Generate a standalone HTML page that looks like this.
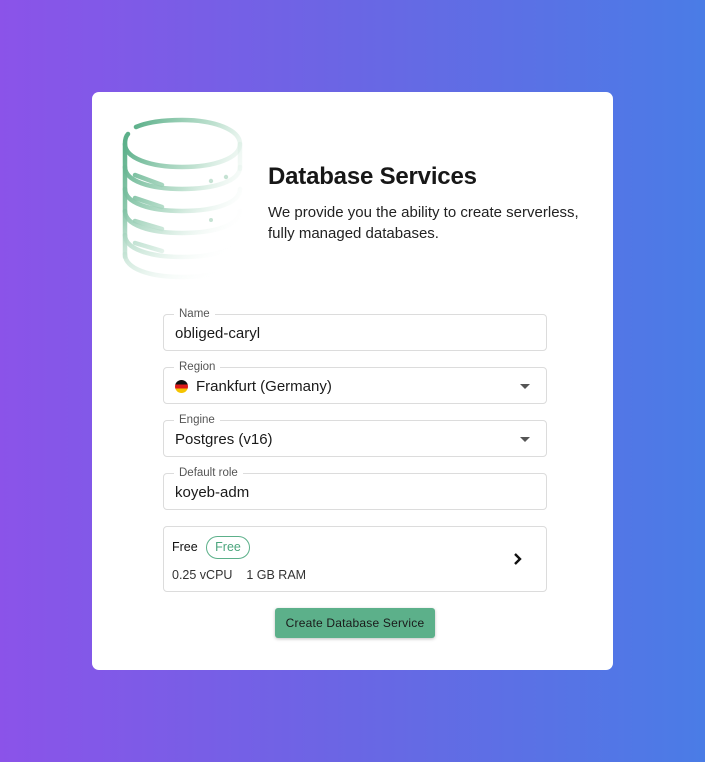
<!DOCTYPE html>
<html><head><meta charset="utf-8"><style>
*{box-sizing:border-box;margin:0;padding:0}
body{width:705px;height:762px;background:linear-gradient(90deg,#8b53e9 0%,#6a66e4 50%,#4a7ce6 100%);font-family:"Liberation Sans",sans-serif;position:relative;overflow:hidden}
.card{position:absolute;left:92px;top:92px;width:521px;height:578px;background:#fff;border-radius:7px}
h1{position:absolute;left:176px;top:71px;font-size:24px;font-weight:bold;color:#171717;letter-spacing:-0.2px}
.desc{position:absolute;left:176px;top:110px;font-size:15px;line-height:21px;color:#222;width:340px}
.f{position:absolute;left:71px;width:384px;height:37px;border:1px solid #dcdcdc;border-radius:4px}
.f .l{position:absolute;left:10px;top:-7px;background:#fff;padding:0 5px;font-size:11.5px;color:#555}
.f .v{position:absolute;left:11px;top:10px;font-size:15px;color:#1a1a1a}
.caret{position:absolute;right:16px;top:16px;width:0;height:0;border-left:5px solid transparent;border-right:5px solid transparent;border-top:5px solid #555}
.flag{display:inline-block;width:13px;height:13px;border-radius:50%;background:linear-gradient(#111 33%,#dd1a1a 33% 66%,#f5c400 66%);vertical-align:-2px;margin-right:8px}
.plan{position:absolute;left:71px;top:434px;width:384px;height:66px;border:1px solid #dcdcdc;border-radius:4px}
.btn{position:absolute;left:183px;top:516px;width:160px;height:30px;background:#5cb08a;border-radius:3px;font-size:12px;color:#1a1a1a;text-align:center;line-height:30px;box-shadow:0 1px 3px rgba(0,0,0,.25);letter-spacing:.2px}
</style></head><body>
<div class="card">
<svg style="position:absolute;left:18px;top:22px" width="140" height="170" viewBox="110 115 140 170">
<defs>
<linearGradient id="g" gradientUnits="userSpaceOnUse" x1="122" y1="150" x2="250" y2="215"><stop offset="0" stop-color="#5cb08a"/><stop offset="0.5" stop-color="#b0dac5" stop-opacity=".8"/><stop offset="1" stop-color="#fff" stop-opacity="0"/></linearGradient>
<linearGradient id="v" gradientUnits="userSpaceOnUse" x1="0" y1="120" x2="0" y2="285"><stop offset="0" stop-color="#fff"/><stop offset="0.55" stop-color="#fff"/><stop offset="1" stop-color="#fff" stop-opacity=".3"/></linearGradient>
<mask id="m"><rect x="100" y="100" width="160" height="200" fill="url(#v)"/></mask>
</defs>
<g fill="none" stroke="url(#g)" stroke-width="4.5" stroke-linecap="round" mask="url(#m)">
<path d="M136 128 C150 122 170 121 182 121 C215 121 240 131 240 145 C240 159 215 168 182 168 C150 168 125 159 125 145 C125 139 127 136 128 135"/>
<path d="M125 145 V258"/>
<path d="M240 145 V170"/>
<path d="M125 168 C125 182 150 190 182 190 C215 190 240 182 240 168"/>
<path d="M125 190 C125 204 150 212 182 212 C215 212 240 204 240 190"/>
<path d="M125 212 C125 226 150 234 182 234 C215 234 240 226 240 212"/>
<path d="M125 236 C125 250 150 258 182 258 C215 258 240 250 240 236"/>
<path d="M125 255 C125 270 150 278 182 278 C215 278 240 270 240 255"/>
<path d="M135 176 L162 186"/><path d="M135 199 L162 208"/><path d="M135 222 L162 230"/><path d="M135 244 L162 252"/>
</g>
<g fill="#c5e2d3"><circle cx="211" cy="182" r="2.2"/><circle cx="226" cy="178" r="2.2"/><circle cx="211" cy="221" r="2"/></g>
</svg>
<h1>Database Services</h1>
<div class="desc">We provide you the ability to create serverless, fully managed databases.</div>
<div class="f" style="top:222px"><span class="l">Name</span><span class="v">obliged-caryl</span></div>
<div class="f" style="top:275px"><span class="l">Region</span><span class="v"><span class="flag"></span>Frankfurt (Germany)</span><span class="caret"></span></div>
<div class="f" style="top:328px"><span class="l">Engine</span><span class="v">Postgres (v16)</span><span class="caret"></span></div>
<div class="f" style="top:381px"><span class="l">Default role</span><span class="v">koyeb-adm</span></div>
<div class="plan">
<span style="position:absolute;left:8px;top:13px;font-size:12.5px;color:#111">Free</span>
<span style="position:absolute;left:42px;top:9px;height:23px;width:44px;border:1px solid #5cb08a;border-radius:12px;font-size:12.5px;color:#4aa57c;text-align:center;line-height:21px">Free</span>
<span style="position:absolute;left:8px;top:41px;font-size:12.5px;color:#333">0.25 vCPU&nbsp;&nbsp;&nbsp;&nbsp;1 GB RAM</span>
<svg style="position:absolute;left:348px;top:25px" width="12" height="14" viewBox="0 0 12 14"><path d="M3 2 L8 7 L3 12" fill="none" stroke="#111" stroke-width="2.4"/></svg>
</div>
<div class="btn">Create Database Service</div>
</div>
</body></html>
